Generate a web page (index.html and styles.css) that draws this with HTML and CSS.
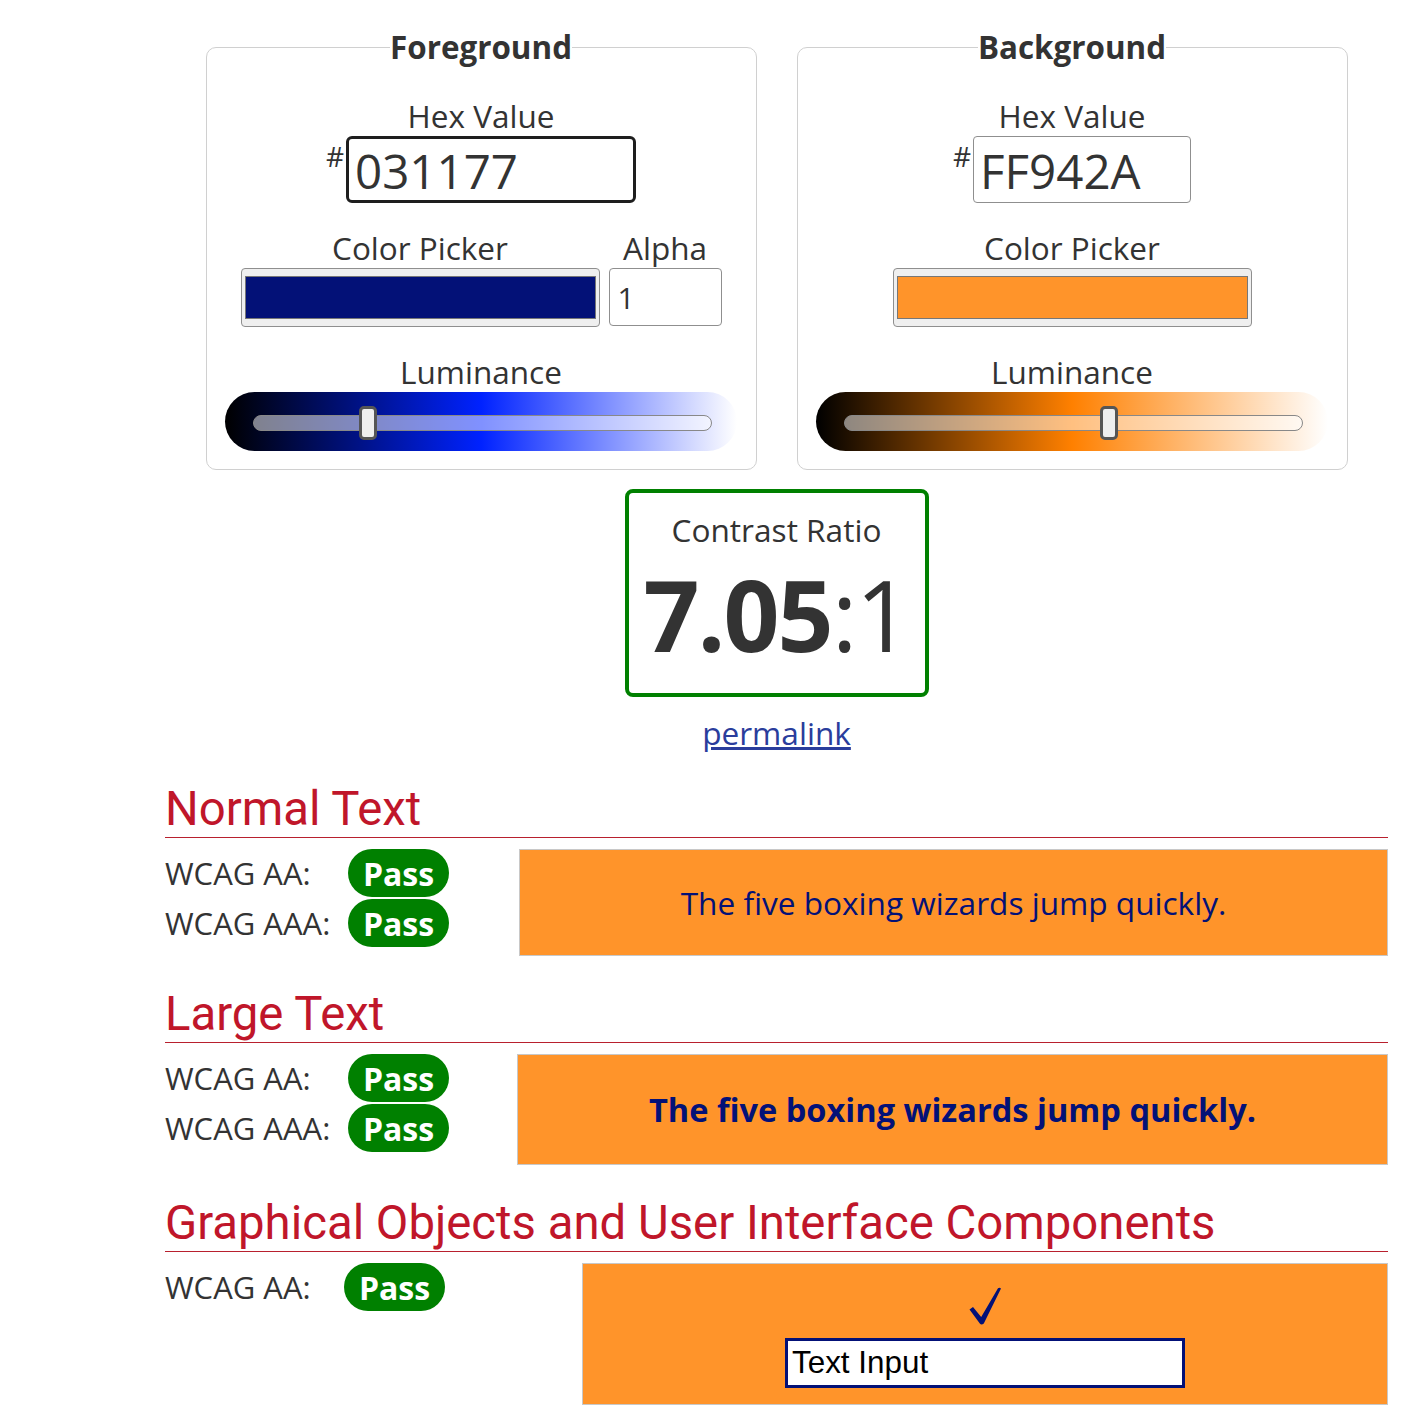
FILE: index.html
```html
<!DOCTYPE html>
<html lang="en">
<head>
<meta charset="utf-8">
<title>Contrast Checker</title>
<link rel="stylesheet" href="styles.css">
</head>
<body>
<main class="page">
  <div class="pickers">
    <fieldset class="panel">
      <legend>Foreground</legend>
      <div class="label">Hex Value</div>
      <div class="hexrow">
        <span class="hash">#</span>
        <input class="hex hex-focus" type="text" value="031177">
      </div>
      <div class="pickrow">
        <div class="col">
          <div class="label">Color Picker</div>
          <div class="swatchbtn"><div class="swatch swatch-fg"></div></div>
        </div>
        <div class="col">
          <div class="label">Alpha</div>
          <input class="alpha" type="text" value="1">
        </div>
      </div>
      <div class="label lum-label">Luminance</div>
      <div class="slider slider-fg">
        <div class="track"></div>
        <div class="thumb thumb-fg"></div>
      </div>
    </fieldset>
    <fieldset class="panel">
      <legend>Background</legend>
      <div class="label">Hex Value</div>
      <div class="hexrow">
        <span class="hash">#</span>
        <input class="hex hex-plain" type="text" value="FF942A">
      </div>
      <div class="pickrow">
        <div class="col">
          <div class="label">Color Picker</div>
          <div class="swatchbtn"><div class="swatch swatch-bg"></div></div>
        </div>
      </div>
      <div class="label lum-label">Luminance</div>
      <div class="slider slider-bg">
        <div class="track"></div>
        <div class="thumb thumb-bg"></div>
      </div>
    </fieldset>
  </div>

  <div class="ratio-wrap">
    <div class="ratio">
      <div class="ratio-title">Contrast Ratio</div>
      <div class="ratio-value"><b>7.05</b>:1</div>
    </div>
    <a class="permalink" href="#">permalink</a>
  </div>

  <section class="result">
    <h2>Normal Text</h2>
    <div class="result-body">
      <div class="checks checks-normal">
        <div class="check"><span class="wcag">WCAG AA:</span><span class="pass">Pass</span></div>
        <div class="check"><span class="wcag">WCAG AAA:</span><span class="pass">Pass</span></div>
      </div>
      <div class="sample sample-normal">The five boxing wizards jump quickly.</div>
    </div>
  </section>

  <section class="result">
    <h2>Large Text</h2>
    <div class="result-body">
      <div class="checks checks-large">
        <div class="check"><span class="wcag">WCAG AA:</span><span class="pass">Pass</span></div>
        <div class="check"><span class="wcag">WCAG AAA:</span><span class="pass">Pass</span></div>
      </div>
      <div class="sample sample-large">The five boxing wizards jump quickly.</div>
    </div>
  </section>

  <section class="result">
    <h2>Graphical Objects and User Interface Components</h2>
    <div class="result-body">
      <div class="checks checks-ui">
        <div class="check"><span class="wcag wcag-ui">WCAG AA:</span><span class="pass">Pass</span></div>
      </div>
      <div class="sample sample-ui">
        <svg class="tick" width="34" height="40" viewBox="0 0 34 40" aria-label="check mark">
          <path d="M1.5 23.5 L5 21 L13.2 31 L30 2.2 Q31.5 1 33 2.6 L15.8 37.5 Q13.5 39.5 11.8 37.6 Z" fill="#031177"/>
        </svg>
        <input class="demo-input" type="text" value="Text Input">
      </div>
    </div>
  </section>
</main>
</body>
</html>
```

FILE: styles.css
```css
* { box-sizing: border-box; }

body {
  margin: 0;
  background: #fff;
  color: #333;
  font-family: "Open Sans", "DejaVu Sans", sans-serif;
}

.page {
  width: 1223px;
  margin-left: 165px;
  padding-top: 27px;
}

.pickers {
  display: flex;
  justify-content: center;
  gap: 40px;
}

.panel {
  width: 551px;
  margin: 0;
  padding: 0 19px 18px;
  border: 1px solid #d0d0d0;
  border-radius: 10px;
  display: flex;
  flex-direction: column;
  align-items: center;
}

.panel legend {
  font-size: 31.4px;
  font-weight: 700;
  line-height: 40px;
  padding: 0;
  margin: 0 auto;
  color: #333;
}

.label {
  font-size: 31.5px;
  line-height: 40px;
  text-align: center;
  color: #333;
}

.panel > .label:first-of-type { margin-top: 29px; }

.hexrow {
  display: flex;
  align-items: flex-start;
  gap: 2px;
}

.hash {
  font-size: 28px;
  line-height: 28px;
  padding-top: 6px;
}

.hex {
  height: 67px;
  font-family: "Open Sans", sans-serif;
  font-size: 47.5px;
  color: #333;
  padding: 2px 6px 0;
  outline: none;
  background: #fff;
}

.hex-focus {
  width: 290px;
  border: 3px solid #1e1e1e;
  border-radius: 6px;
}

.hex-plain {
  width: 218px;
  border: 1px solid #8f8f8f;
  border-radius: 4px;
}

.pickrow {
  display: flex;
  gap: 9px;
  margin-top: 25px;
}

.col {
  display: flex;
  flex-direction: column;
  align-items: center;
}

.swatchbtn {
  width: 359px;
  height: 59px;
  background: #efefef;
  border: 1px solid #8f8f8f;
  border-radius: 4px;
  padding: 7px 3px 7px 3px;
}

.swatch {
  height: 100%;
  border: 1px solid #777;
}

.swatch-fg { background: #031177; }
.swatch-bg { background: #ff942a; }

.alpha {
  width: 113px;
  height: 58px;
  border: 1px solid #8f8f8f;
  border-radius: 4px;
  font-family: "Open Sans", sans-serif;
  font-size: 30px;
  color: #333;
  padding: 0 8px;
}

.lum-label { margin-top: 25px; }

.slider {
  position: relative;
  width: 512px;
  height: 59px;
  border-radius: 30px;
  margin-left: -1px;
}

.slider-fg { background: linear-gradient(to right, #000 0%, #0022ff 50%, #ffffff 100%); }
.slider-bg { background: linear-gradient(to right, #000 0%, #ff8000 50%, #ffffff 100%); }

.track {
  position: absolute;
  left: 28px;
  right: 25px;
  top: 23px;
  height: 16px;
  border: 1px solid #888;
  border-radius: 8px;
  background: rgba(255, 255, 255, 0.5);
}

.thumb {
  position: absolute;
  top: 14px;
  width: 18px;
  height: 34px;
  background: #eee;
  border: 3px solid #555;
  border-radius: 5px;
}

.thumb-fg { left: 134px; }
.thumb-bg { left: 284px; }

.ratio-wrap {
  display: flex;
  flex-direction: column;
  align-items: center;
  margin-top: 19px;
}

.ratio {
  width: 304px;
  height: 208px;
  border: 4px solid #008000;
  border-radius: 8px;
  text-align: center;
  padding-top: 17px;
}

.ratio-title {
  font-size: 31.6px;
  line-height: 40px;
}

.ratio-value {
  font-size: 98px;
  line-height: 100px;
  margin-top: 14px;
  letter-spacing: -2px;
}

.ratio-value b { font-weight: 700; }

.permalink {
  font-size: 31.6px;
  line-height: 40px;
  color: #2a3d9c;
  margin-top: 16px;
}

.result h2 {
  font-family: Roboto, "Liberation Sans", sans-serif;
  font-weight: 400;
  font-size: 47.3px;
  line-height: 52px;
  color: #c0162a;
  margin: 0;
  padding-bottom: 2px;
  border-bottom: 1px solid #b8202e;
}

.result:nth-of-type(1) { margin-top: 30px; }
.result + .result { margin-top: 32px; }

.result-body {
  display: flex;
  align-items: stretch;
  margin-top: 11px;
}

.checks {
  display: flex;
  flex-direction: column;
  gap: 2px;
  flex: none;
}

.checks-normal { width: 354px; }
.checks-large { width: 352px; }
.checks-ui { width: 417px; }

.check {
  display: flex;
  align-items: center;
  height: 48px;
}

.wcag {
  font-size: 31px;
  width: 183px;
  color: #333;
}

.wcag-ui { width: 179px; }

.pass {
  display: inline-flex;
  align-items: center;
  justify-content: center;
  width: 101px;
  height: 48px;
  border-radius: 24px;
  background: #008000;
  color: #fff;
  font-size: 32px;
  font-weight: 700;
}

.sample {
  flex: 1;
  background: #ff942a;
  border: 1px solid #c8c8c8;
  color: #031177;
  display: flex;
  align-items: center;
  justify-content: center;
}

.sample-normal {
  height: 107px;
  font-size: 31.6px;
}

.sample-large {
  height: 111px;
  font-size: 32.6px;
  font-weight: 700;
}

.sample-ui {
  height: 142px;
  flex-direction: column;
  justify-content: flex-start;
  padding-top: 22px;
}

.tick {
  display: block;
}

.demo-input {
  margin-top: 12px;
  width: 400px;
  height: 50px;
  border: 3px solid #031177;
  background: #fff;
  font-family: "Liberation Sans", Arial, sans-serif;
  font-size: 31.4px;
  color: #000;
  padding: 0 4px;
  outline: none;
}
```
